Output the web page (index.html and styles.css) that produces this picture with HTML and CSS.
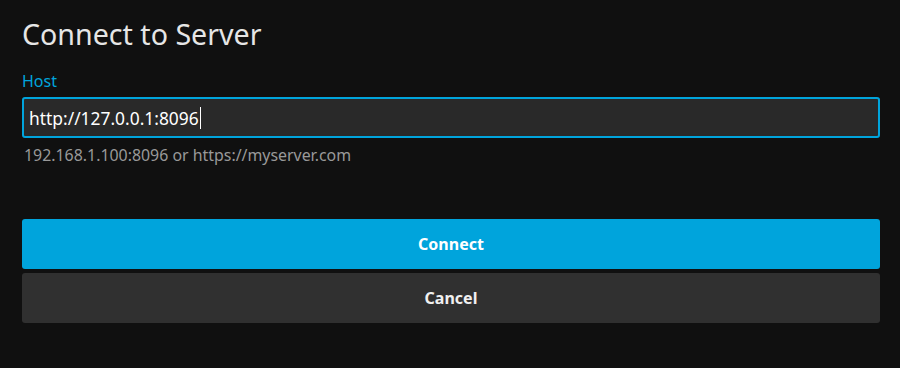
FILE: index.html
```html
<!DOCTYPE html>
<html>
<head>
<meta charset="utf-8">
<link rel="stylesheet" href="styles.css">
</head>
<body>
<div class="page">
  <h1 class="title">Connect to Server</h1>
  <div class="field">
    <label class="label">Host</label>
    <div class="input"><span class="value">http://127.0.0.1:8096</span><span class="caret"></span></div>
    <div class="hint">192.168.1.100:8096 or https://myserver.com</div>
  </div>
  <div class="buttons">
    <div class="btn btn-primary">Connect</div>
    <div class="btn btn-secondary">Cancel</div>
  </div>
</div>
</body>
</html>
```
FILE: styles.css
```css
html, body {
  margin: 0;
  padding: 0;
  background: #101010;
  font-family: "Noto Sans", "Open Sans", sans-serif;
  color: #e6e6e6;
}
.page {
  padding: 14px 20px 0 22px;
  display: flex;
  flex-direction: column;
}
.title {
  margin: 0;
  font-size: 28.6px;
  font-weight: 400;
  line-height: 40px;
  color: #e6e6e6;
}
.field {
  margin-top: 17px;
  display: flex;
  flex-direction: column;
}
.label {
  font-size: 16px;
  line-height: 20px;
  color: #00a4dc;
  margin-bottom: 6px;
}
.input {
  height: 37px;
  border: 2px solid #00a4dc;
  border-radius: 3px;
  background: #292929;
  display: flex;
  align-items: center;
  padding-left: 5px;
  color: #fff;
  font-size: 17.4px;
}
.caret {
  width: 1px;
  height: 22px;
  background: #fff;
  margin-left: 1px;
}
.hint {
  margin-top: 7px;
  font-size: 15.9px;
  line-height: 20px;
  color: #999;
  padding-left: 2px;
}
.buttons {
  margin-top: 54px;
  display: flex;
  flex-direction: column;
  gap: 4px;
}
.btn {
  height: 50px;
  border-radius: 3px;
  display: flex;
  align-items: center;
  justify-content: center;
  font-size: 16px;
  font-weight: 700;
  color: #fff;
}
.btn-primary {
  background: #00a4dc;
}
.btn-secondary {
  background: #303030;
  color: #f0f0f0;
}
```
